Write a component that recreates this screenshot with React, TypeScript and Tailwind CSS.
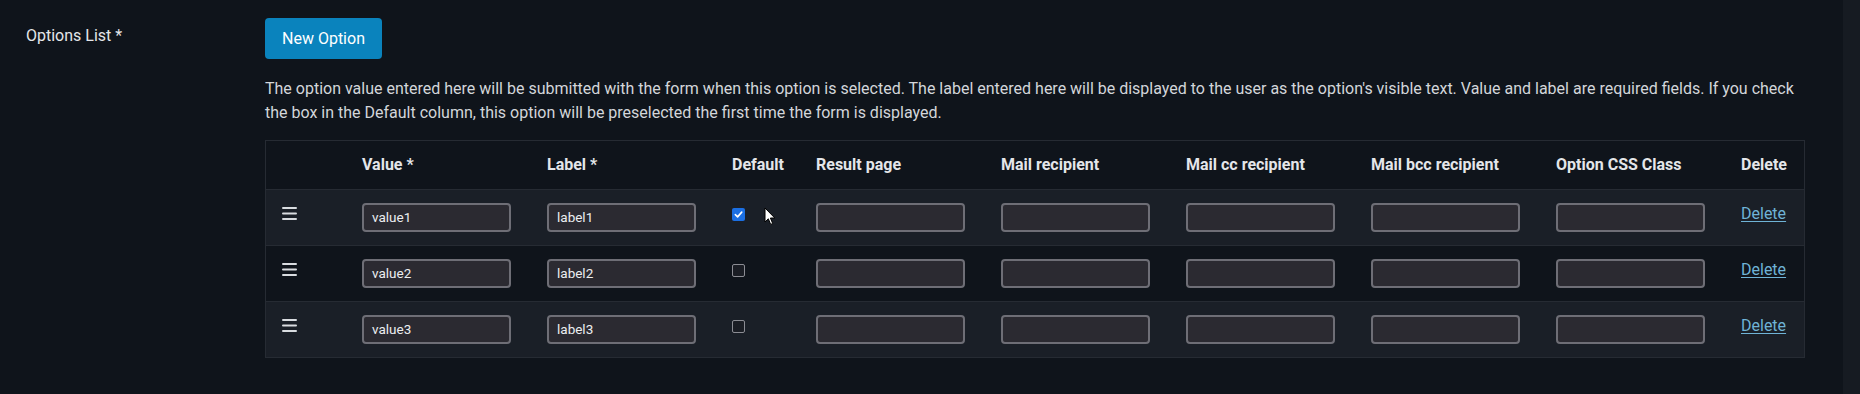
import React from 'react';

const cols =
  'grid grid-cols-[80px_185px_185px_84px_185px_185px_185px_185px_185px_1fr]';

const headers = [
  '',
  'Value *',
  'Label *',
  'Default',
  'Result page',
  'Mail recipient',
  'Mail cc recipient',
  'Mail bcc recipient',
  'Option CSS Class',
  'Delete',
];

const rows = [
  { value: 'value1', label: 'label1', checked: true },
  { value: 'value2', label: 'label2', checked: false },
  { value: 'value3', label: 'label3', checked: false },
];

const Handle = () => (
  <svg width="15" height="13" viewBox="0 0 15 13" className="mt-[4px]">
    <rect x="0" y="0" width="15" height="2" rx="1" fill="#d9dce0" />
    <rect x="0" y="5.5" width="15" height="2" rx="1" fill="#d9dce0" />
    <rect x="0" y="11" width="15" height="2" rx="1" fill="#d9dce0" />
  </svg>
);

const Field = ({ value = '' }: { value?: string }) => (
  <div className="h-[29px] w-[149px] rounded-[4px] border-2 border-[#6e6e76] bg-[#2b2a31] px-[8px] text-[13.5px] leading-[25px] text-[#eceef0]">
    {value}
  </div>
);

const Check = ({ checked }: { checked: boolean }) =>
  checked ? (
    <span className="mt-[5px] flex h-[13px] w-[13px] items-center justify-center rounded-[2px] bg-[#1b6fe3]">
      <svg width="9" height="9" viewBox="0 0 10 10">
        <path d="M1.5 5.2 L4 7.6 L8.6 2.4" fill="none" stroke="#fff" strokeWidth="1.8" strokeLinecap="round" strokeLinejoin="round" />
      </svg>
    </span>
  ) : (
    <span className="mt-[5px] block h-[13px] w-[13px] rounded-[2px] border border-[#8b8c93] bg-[#1a1d24]" />
  );

const Cursor = () => (
  <svg width="12" height="19" viewBox="0 0 12 19" className="absolute left-[764px] top-[207px]">
    <path d="M1 1 L1 15 L4.3 11.8 L6.7 17.4 L8.7 16.5 L6.4 11 L10.8 11 Z" fill="#fff" stroke="#000" strokeWidth="1" strokeLinejoin="round" />
  </svg>
);

const App: React.FC = () => {
  return (
    <div className="relative flex h-screen w-full bg-[#0f141b] font-['Roboto',sans-serif] text-[16px] leading-[24px] text-[#e4e6e9]">
      <main className="flex flex-1">
        {/* Field label */}
        <div className="w-[265px] shrink-0 pl-[26px] pt-[24px]">Options List *</div>

        {/* Field body */}
        <div className="flex-1 pt-[18px] pr-[38px]">
          <button className="h-[41px] rounded-[4px] bg-[#0a83bd] px-[17px] text-white">New Option</button>

          <p className="mt-[18px] text-[#d3d6da]">
            The option value entered here will be submitted with the form when this option is selected. The label
            entered here will be displayed to the user as the option's visible text. Value and label are required
            fields. If you check the box in the Default column, this option will be preselected the first time the
            form is displayed.
          </p>

          <div className="mt-[15px] border border-[#262b33]">
            <div className={`${cols} font-bold`}>
              {headers.map((h, i) => (
                <div key={i} className="px-[16px] py-[12px]">
                  {h}
                </div>
              ))}
            </div>

            {rows.map((r, i) => (
              <div
                key={r.value}
                className={`${cols} h-[56px] border-t border-[#262b33] ${i % 2 === 0 ? 'bg-[#1a1f27]' : 'bg-[#0f141b]'}`}
              >
                <div className="px-[16px] pt-[13px]">
                  <Handle />
                </div>
                <div className="px-[16px] pt-[13px]">
                  <Field value={r.value} />
                </div>
                <div className="px-[16px] pt-[13px]">
                  <Field value={r.label} />
                </div>
                <div className="px-[16px] pt-[13px]">
                  <Check checked={r.checked} />
                </div>
                <div className="px-[16px] pt-[13px]">
                  <Field />
                </div>
                <div className="px-[16px] pt-[13px]">
                  <Field />
                </div>
                <div className="px-[16px] pt-[13px]">
                  <Field />
                </div>
                <div className="px-[16px] pt-[13px]">
                  <Field />
                </div>
                <div className="px-[16px] pt-[13px]">
                  <Field />
                </div>
                <div className="px-[16px] pt-[12px]">
                  <a href="#" className="text-[#6fb3d6] underline underline-offset-2">
                    Delete
                  </a>
                </div>
              </div>
            ))}
          </div>
        </div>
      </main>

      {/* scrollbar track */}
      <div className="w-[17px] shrink-0 bg-[#161b22]" />

      <Cursor />
    </div>
  );
};

export default App;
